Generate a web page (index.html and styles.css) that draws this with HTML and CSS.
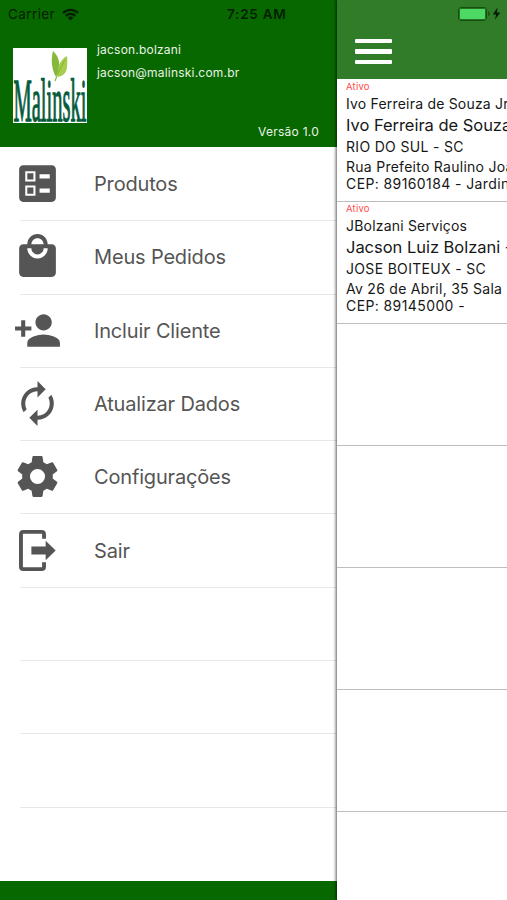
FILE: index.html
```html
<!DOCTYPE html>
<html lang="pt-BR">
<head>
<meta charset="utf-8">
<meta name="viewport" content="width=device-width, initial-scale=1">
<title>Malinski</title>
<link rel="stylesheet" href="styles.css">
</head>
<body>
<div class="app">
  <aside class="drawer">
    <header class="profile">
      <div class="status">
        <span class="carrier">Carrier</span>
        <svg class="wifi" viewBox="0 0 17 13"><g fill="none" stroke="#031e00" stroke-width="2.4"><path d="M1 5C5.2 .8 11.8 .8 16 5"/><path d="M3.7 7.8C6.4 5.2 10.6 5.2 13.3 7.8"/></g><path fill="#031e00" d="M5.7 9.7C7.3 8.2 9.7 8.2 11.3 9.7L8.5 12.6Z"/></svg>
        <span class="time">7:25 AM</span>
      </div>
      <div class="account">
        <svg class="logo" viewBox="0 0 74 75">
          <path fill="#fff" d="M0 0h74v75H0z"/>
          <path fill="#86b93b" d="M40 3C45 8 47 12 46 22L43 29C38 20 38 11 40 3Z"/>
          <path fill="#a5ce4e" d="M54 8C55 21 54 27 45 29C44 18 47 12 54 8Z"/>
          <path fill="none" stroke="#86b93b" stroke-width="1.2" d="M52 12C48 18 45 25 42 33"/>
          <text class="logo-text" x="0" y="0" textLength="73" lengthAdjust="spacingAndGlyphs" transform="translate(0.5 72.5) scale(1 1.6)">Malinski</text>
        </svg>
        <div class="identity">
          <span class="user">jacson.bolzani</span>
          <span class="mail">jacson@malinski.com.br</span>
        </div>
      </div>
      <span class="version">Versão 1.0</span>
    </header>
    <nav class="menu">
      <a class="item"><svg class="icon" viewBox="0 0 24 24"><path fill-rule="evenodd" d="M13 9.5h5v-2h-5v2zm0 7h5v-2h-5v2zm6 4.5H5c-1.1 0-2-.9-2-2V5c0-1.1.9-2 2-2h14c1.1 0 2 .9 2 2v14c0 1.1-.9 2-2 2zM6 11h5V6H6v5zm1-4h3v3H7V7zM6 18h5v-5H6v5zm1-4h3v3H7v-3z"/></svg><span class="label">Produtos</span></a>
      <a class="item"><svg class="icon" viewBox="0 0 24 24"><path d="M19 6h-2c0-2.76-2.24-5-5-5S7 3.24 7 6H5c-1.1 0-1.99.9-1.99 2L3 20c0 1.1.9 2 2 2h14c1.1 0 2-.9 2-2V8c0-1.1-.9-2-2-2zm-7-3c1.66 0 3 1.34 3 3H9c0-1.66 1.34-3 3-3zm0 10c-2.76 0-5-2.24-5-5h2c0 1.66 1.34 3 3 3s3-1.34 3-3h2c0 2.76-2.24 5-5 5z"/></svg><span class="label">Meus Pedidos</span></a>
      <a class="item"><svg class="icon" viewBox="0 0 24 24"><path d="M15 12c2.21 0 4-1.79 4-4s-1.79-4-4-4-4 1.790-4 4 1.790 4 4 4zm-9-2V7H4v3H1v2h3v3h2v-3h3v-2H6zm9 4c-2.670 0-8 1.340-8 4v2h16v-2c0-2.660-5.330-4-8-4z"/></svg><span class="label">Incluir Cliente</span></a>
      <a class="item"><svg class="icon" viewBox="0 0 24 24"><path d="M12 6v3l4-4-4-4v3c-4.420 0-8 3.580-8 8 0 1.570.460 3.030 1.240 4.260L6.700 14.800C6.250 13.970 6 13.010 6 12c0-3.310 2.690-6 6-6zm6.760 1.740L17.300 9.200c.440.840.700 1.790.700 2.800 0 3.310-2.690 6-6 6v-3l-4 4 4 4v-3c4.420 0 8-3.580 8-8 0-1.570-.460-3.030-1.240-4.260z"/></svg><span class="label">Atualizar Dados</span></a>
      <a class="item"><svg class="icon" viewBox="0 0 24 24"><path d="M19.430 12.980c.040-.320.070-.640.070-.980s-.030-.660-.070-.980l2.110-1.650c.190-.150.240-.420.120-.640l-2-3.460c-.120-.220-.390-.300-.610-.220l-2.490 1c-.520-.400-1.080-.730-1.690-.980l-.380-2.650C14.460 2.180 14.250 2 14 2h-4c-.250 0-.460.180-.490.420l-.380 2.650c-.610.250-1.170.590-1.690.980l-2.490-1c-.230-.090-.490 0-.610.220l-2 3.460c-.130.220-.070.490.120.640l2.110 1.650c-.040.320-.070.650-.070.980s.030.660.070.980l-2.110 1.650c-.190.150-.240.420-.120.640l2 3.460c.120.220.390.300.610.220l2.490-1c.520.400 1.080.730 1.690.980l.380 2.650c.030.240.240.420.490.420h4c.250 0 .460-.180.490-.420l.380-2.650c.610-.250 1.170-.590 1.690-.980l2.490 1c.230.090.490 0 .610-.220l2-3.460c.120-.220.070-.490-.120-.640l-2.110-1.650zM12 15.700a3.700 3.700 0 1 1 0-7.400 3.700 3.700 0 0 1 0 7.400z"/></svg><span class="label">Configurações</span></a>
      <a class="item"><svg class="icon" viewBox="0 0 24 24"><path fill="none" stroke="#555" stroke-width="1.9" d="M15.200 6.200V4.100Q15.200 2.900 14 2.900H5.100Q3.900 2.900 3.900 4.100V19.900Q3.900 21.100 5.100 21.100H14Q15.200 21.100 15.200 19.900V17.800"/><path d="M9 10H16V7.200L20.900 12L16 16.800V14H9Z"/></svg><span class="label">Sair</span></a>
      <div class="item"></div>
      <div class="item"></div>
      <div class="item"></div>
      <div class="item"></div>
    </nav>
    <footer class="drawer-foot"></footer>
  </aside>
  <main class="content">
    <header class="topbar">
      <div class="power">
        <span class="battery"></span><span class="nub"></span>
        <svg class="bolt" viewBox="0 0 8 12"><path fill="#071c05" d="M5 .5L.5 7H3.600L2.600 11.700L7.500 5H4.400Z"/></svg>
      </div>
      <div class="burger"><i></i><i></i><i></i></div>
    </header>
    <section class="clients">
      <article class="client">
        <span class="state">Ativo</span>
        <span class="alias">Ivo Ferreira de Souza Jr</span>
        <span class="name">Ivo Ferreira de Souza</span>
        <span class="city">RIO DO SUL - SC</span>
        <span class="street">Rua Prefeito Raulino Joa</span>
        <span class="cep">CEP: 89160184 - Jardin</span>
      </article>
      <article class="client">
        <span class="state">Ativo</span>
        <span class="alias">JBolzani Serviços</span>
        <span class="name">Jacson Luiz Bolzani -</span>
        <span class="city">JOSE BOITEUX - SC</span>
        <span class="street">Av 26 de Abril, 35 Sala</span>
        <span class="cep">CEP: 89145000 -</span>
      </article>
      <article class="client"></article>
      <article class="client"></article>
      <article class="client"></article>
      <article class="client"></article>
    </section>
  </main>
</div>
</body>
</html>
```
FILE: styles.css
```css
* { box-sizing: border-box; }
body { margin: 0; background: #fff; font-family: Inter, "Liberation Sans", sans-serif; }
.app { display: flex; width: 507px; height: 900px; overflow: hidden; }

.drawer { display: flex; flex-direction: column; width: 337px; flex: none; }
.profile { height: 147px; background: #086800; color: #e8f3e6; display: flex; flex-direction: column; }
.status { display: flex; align-items: center; height: 28px; padding-left: 8px; color: #031e00; font-size: 13.500px; }
.carrier { width: 48px; letter-spacing: .4px; white-space: nowrap; }
.wifi { width: 17px; height: 13px; margin-left: 6px; }
.time { margin-left: 148px; font-weight: 600; letter-spacing: .75px; white-space: nowrap; }
.account { display: flex; padding: 20px 0 0 13px; height: 96px; }
.logo { width: 74px; height: 75px; flex: none; }
.logo-text { font-family: "Liberation Serif", serif; font-size: 38px; fill: #075b3d; stroke: #075b3d; stroke-width: .8px; }
.identity { display: flex; flex-direction: column; margin: -6px 0 0 10px; font-size: 12px; line-height: 16px; gap: 7px; }
.user, .mail { letter-spacing: .2px; white-space: nowrap; }
.version { align-self: flex-end; margin-right: 18px; font-size: 12px; line-height: 16px; letter-spacing: .25px; }

.menu { display: grid; grid-template-rows: repeat(10, 73.300px); padding-top: 1px; }
.item { display: flex; align-items: center; margin-left: 20px; border-bottom: 1px solid #e7e7e7; color: #555; }
.item:last-child { border-bottom: 0; }
.icon { width: 49px; height: 49px; margin: -1px 0 0 -7px; fill: #555; flex: none; }
.label { margin-left: 32px; font-size: 20px; line-height: 24px; letter-spacing: -.17px; white-space: nowrap; }
.drawer-foot { flex: 1; background: #086800; }

.content { flex: none; width: 170px; background: #fff; position: relative; box-shadow: -1px 0 3px rgba(0, 0, 0, .65); }
.topbar { height: 79px; background: #307c28; }
.power { display: flex; align-items: center; height: 27px; padding-left: 121px; }
.battery { width: 29px; height: 14px; border: 1px solid #174d12; border-radius: 3px; background: #4cd964; box-shadow: inset 0 0 0 1px #286f22; }
.nub { width: 2px; height: 5px; margin-left: 1px; background: #1d5c17; border-radius: 0 2px 2px 0; }
.bolt { width: 9px; height: 13px; margin-left: 2px; }
.burger { display: grid; gap: 6px; width: 37px; margin: 12px 0 0 18px; }
.burger i { height: 4.300px; background: #fff; border-radius: 1px; }
.clients { display: grid; grid-template-rows: repeat(6, 122.100px); padding-top: .6px; }
.client { display: flex; flex-direction: column; border-bottom: 1px solid #bdbdbd; padding-left: 9px; overflow: hidden; white-space: nowrap; color: #171717; font-size: 14px; letter-spacing: .2px; }
.state { color: #ff4b4b; font-size: 9.500px; line-height: 14px; }
.alias { margin-top: -.8px; line-height: 21px; }
.name { font-size: 16.500px; line-height: 22px; letter-spacing: -.03px; }
.city { line-height: 21px; letter-spacing: .32px; }
.street { line-height: 19px; letter-spacing: .27px; }
.cep { line-height: 16px; letter-spacing: .4px; }
```
